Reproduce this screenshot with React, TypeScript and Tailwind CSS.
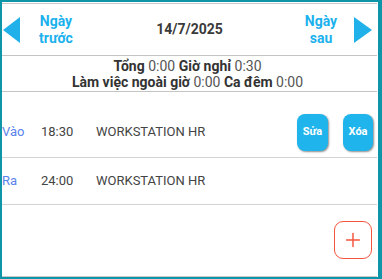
import { Plus } from "lucide-react";

const rows = [
  { kind: "Vào", time: "18:30", place: "WORKSTATION HR", actions: true },
  { kind: "Ra", time: "24:00", place: "WORKSTATION HR", actions: false },
];

function Arrow({ dir }: { dir: "left" | "right" }) {
  return (
    <svg width="18" height="26" viewBox="0 0 18 26" className="shrink-0">
      {dir === "left" ? (
        <polygon points="17,0 17,26 0,13" fill="#20b1ea" />
      ) : (
        <polygon points="0,0 0,26 18,13" fill="#20b1ea" />
      )}
    </svg>
  );
}

export default function App() {
  return (
    <div className="flex h-[279px] w-[382px] flex-col border-b-2 border-l-2 border-r-4 border-t-2 border-[#0f95a8] bg-white font-['Roboto',sans-serif]">
      <div className="mr-px mt-px flex flex-1 flex-col border-b border-t border-[#c9c9c9]">
        {/* Day switcher */}
        <div className="flex h-[52px] items-center border-b border-[#c4c4c4]">
          <div className="ml-px">
            <Arrow dir="left" />
          </div>
          <div className="w-[70px] text-center text-[14px] font-bold leading-[17px] text-[#1ab1ec]">
            Ngày
            <br />
            trước
          </div>
          <div className="flex-1 text-center text-[14px] font-bold text-[#3a3a3a]">14/7/2025</div>
          <div className="w-[66px] text-center text-[14px] font-bold leading-[17px] text-[#1ab1ec]">
            Ngày
            <br />
            sau
          </div>
          <Arrow dir="right" />
          <div className="w-[5px]" />
        </div>

        {/* Summary */}
        <div className="flex h-[36px] flex-col items-center justify-center border-b border-[#c4c4c4] pr-1 text-[14px] leading-[16px] text-[#555]">
          <div>
            <b className="text-[#333]">Tổng</b> 0:00 <b className="text-[#333]">Giờ nghỉ</b> 0:30
          </div>
          <div>
            <b className="text-[#333]">Làm việc ngoài giờ</b> 0:00 <b className="text-[#333]">Ca đêm</b> 0:00
          </div>
        </div>

        {/* Entries */}
        {rows.map((r) => (
          <div
            key={r.kind}
            className={`flex items-center border-b border-[#d4d4d4] text-[13px] text-[#444] ${
              r.actions ? "h-[66px] pt-[15px]" : "h-[47px]"
            }`}
          >
            <div className="w-[39px] text-[#5a83ec]">{r.kind}</div>
            <div className="w-[55px]">{r.time}</div>
            <div className="flex-1">{r.place}</div>
            {r.actions && (
              <div className="mr-[4px] flex gap-[15px]">
                <button className="h-[37px] w-[31px] rounded-[8px] bg-[#1fb5ec] text-[11px] font-bold text-white shadow-[1px_1px_2px_rgba(0,0,0,0.45)]">
                  Sửa
                </button>
                <button className="h-[37px] w-[30px] rounded-[8px] bg-[#1fb5ec] text-[11px] font-bold text-white shadow-[1px_1px_2px_rgba(0,0,0,0.45)]">
                  Xóa
                </button>
              </div>
            )}
          </div>
        ))}

        <div className="flex flex-1 justify-end pr-[5px] pt-[16px]">
          <button className="flex h-[38px] w-[38px] items-center justify-center rounded-[9px] border-[1.5px] border-[#f4543e] bg-white">
            <Plus size={22} strokeWidth={1.6} color="#f4543e" />
          </button>
        </div>
      </div>
    </div>
  );
}
